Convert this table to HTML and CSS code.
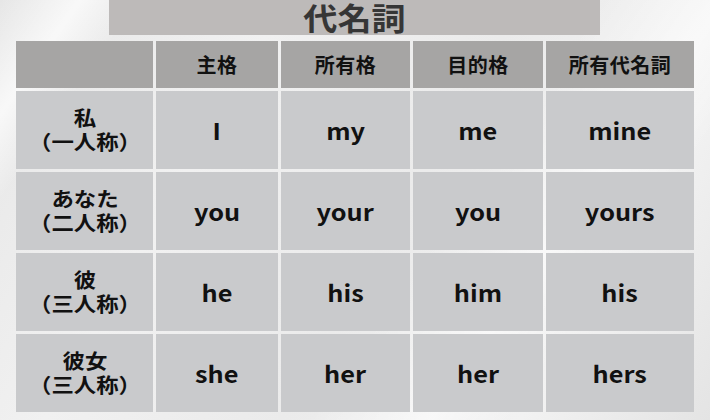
FILE: index.html
```html
<!DOCTYPE html>
<html lang="ja">
<head>
<meta charset="utf-8">
<link rel="stylesheet" href="styles.css">
</head>
<body>
<div class="page">
  <div class="title-wrap"><h1 class="title">代名詞</h1></div>
  <div class="table">
    <div class="cell head"></div>
    <div class="cell head">主格</div>
    <div class="cell head">所有格</div>
    <div class="cell head">目的格</div>
    <div class="cell head">所有代名詞</div>

    <div class="cell label"><span class="t">私<br>（一人称）</span></div>
    <div class="cell word"><span class="t">I</span></div>
    <div class="cell word"><span class="t">my</span></div>
    <div class="cell word"><span class="t">me</span></div>
    <div class="cell word"><span class="t">mine</span></div>

    <div class="cell label"><span class="t">あなた<br>（二人称）</span></div>
    <div class="cell word"><span class="t">you</span></div>
    <div class="cell word"><span class="t">your</span></div>
    <div class="cell word"><span class="t">you</span></div>
    <div class="cell word"><span class="t">yours</span></div>

    <div class="cell label"><span class="t">彼<br>（三人称）</span></div>
    <div class="cell word"><span class="t">he</span></div>
    <div class="cell word"><span class="t">his</span></div>
    <div class="cell word"><span class="t">him</span></div>
    <div class="cell word"><span class="t">his</span></div>

    <div class="cell label"><span class="t">彼女<br>（三人称）</span></div>
    <div class="cell word"><span class="t">she</span></div>
    <div class="cell word"><span class="t">her</span></div>
    <div class="cell word"><span class="t">her</span></div>
    <div class="cell word"><span class="t">hers</span></div>
  </div>
</div>
</body>
</html>
```

FILE: styles.css
```css
html, body {
  margin: 0;
  padding: 0;
}
body {
  width: 710px;
  height: 420px;
  overflow: hidden;
  font-family: "Noto Sans CJK JP", "Noto Sans", sans-serif;
  background:
    linear-gradient(125deg, rgba(255,255,255,0) 0%, rgba(255,255,255,0.7) 8%, rgba(255,255,255,0) 14%, rgba(255,255,255,0) 60%, rgba(255,255,255,0.6) 72%, rgba(255,255,255,0) 80%),
    linear-gradient(120deg, #e6e6e6 0%, #f1f1f1 30%, #ebebeb 55%, #f2f2f2 80%, #e4e4e4 100%);
}
.page {
  display: flex;
  flex-direction: column;
  align-items: flex-start;
}
.title-wrap {
  margin-left: 109px;
  width: 491px;
  height: 35px;
  background: #bdbab9;
  display: flex;
  justify-content: center;
  align-items: center;
}
.title {
  margin: 0;
  font-size: 31px;
  font-weight: 700;
  color: #363636;
  line-height: 35px;
  transform: translateY(-1px) scaleX(1.1);
}
.table {
  margin-top: 6px;
  margin-left: 16px;
  display: grid;
  grid-template-columns: 137px 122px 129px 130px 148px;
  grid-template-rows: 47px repeat(4, 78px);
  gap: 3px;
}
.cell {
  display: flex;
  align-items: center;
  justify-content: center;
  text-align: center;
  color: #111;
  font-weight: 700;
  background: #c9cacc;
}
.t {
  display: inline-block;
  transform: scaleX(1.1);
}
.head {
  background: #a6a5a4;
  font-size: 20px;
  letter-spacing: 0.5px;
}
.label {
  font-size: 20px;
  line-height: 24px;
}
.label .t {
  transform: scaleX(1.12);
}
.word {
  font-size: 23px;
}
```
